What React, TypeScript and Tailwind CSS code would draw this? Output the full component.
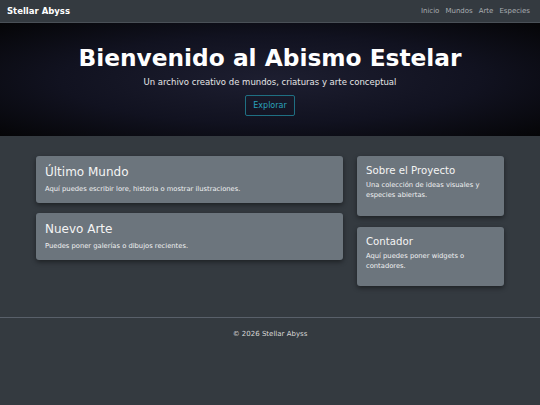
import React from "react";

const font = { fontFamily: '"DejaVu Sans", Verdana, sans-serif' };

export default function App() {
  return (
    <div style={font} className="w-[540px] h-[405px] bg-[#343a40] flex flex-col overflow-hidden">
      <nav className="h-[23px] flex items-center justify-between px-[7px] bg-[#343a40] border-b border-[#4a5057] shrink-0">
        <span className="text-[8.5px] font-bold text-white">Stellar Abyss</span>
        <div className="flex gap-[6px] text-[7px] text-[#a9adb1] pr-[3px]">
          <span>Inicio</span>
          <span>Mundos</span>
          <span>Arte</span>
          <span>Especies</span>
        </div>
      </nav>
      <header className="h-[113px] shrink-0 flex flex-col items-center bg-[radial-gradient(ellipse_at_center,#1d1e30_0%,#111220_55%,#050507_100%)]">
        <h1 className="mt-[21px] text-[23.3px] leading-[28px] font-bold text-white">Bienvenido al Abismo Estelar</h1>
        <p className="mt-[4px] text-[8.5px] leading-[12px] text-[#e6e6e6]">Un archivo creativo de mundos, criaturas y arte conceptual</p>
        <button className="mt-[7px] w-[50px] h-[21px] border border-[#1f6f82] rounded-[2px] text-[8px] text-[#2aa3bd]">Explorar</button>
      </header>
      <main className="flex gap-[14px] px-[36px] pt-[20px] h-[182px] shrink-0 border-b border-[#59606a]">
        <div className="w-[307px] flex flex-col gap-[10px]">
          <div className="bg-[#6c757d] rounded-[3px] px-[9px] pt-[8px] pb-[8.5px] shadow-[0_2px_5px_rgba(0,0,0,0.45)]">
            <h4 className="text-[12px] leading-[16px] text-[#f4f4f4] mb-[3.5px]">Último Mundo</h4>
            <p className="text-[6.75px] leading-[11px] text-[#f0f1f2]">Aquí puedes escribir lore, historia o mostrar ilustraciones.</p>
          </div>
          <div className="bg-[#6c757d] rounded-[3px] px-[9px] pt-[8px] pb-[8.5px] shadow-[0_2px_5px_rgba(0,0,0,0.45)]">
            <h4 className="text-[12px] leading-[16px] text-[#f4f4f4] mb-[3.5px]">Nuevo Arte</h4>
            <p className="text-[6.75px] leading-[11px] text-[#f0f1f2]">Puedes poner galerías o dibujos recientes.</p>
          </div>
        </div>
        <div className="w-[147px] flex flex-col gap-[11px]">
          <div className="bg-[#6c757d] rounded-[3px] px-[9px] pt-[8px] pb-[15px] shadow-[0_2px_5px_rgba(0,0,0,0.45)]">
            <h5 className="text-[10.2px] leading-[14px] text-[#f4f4f4] mb-[2px]">Sobre el Proyecto</h5>
            <p className="text-[6.75px] leading-[10.4px] text-[#f0f1f2]">Una colección de ideas visuales y especies abiertas.</p>
          </div>
          <div className="bg-[#6c757d] rounded-[3px] px-[9px] pt-[8px] pb-[14px] shadow-[0_2px_5px_rgba(0,0,0,0.45)]">
            <h5 className="text-[10.2px] leading-[14px] text-[#f4f4f4] mb-[2px]">Contador</h5>
            <p className="text-[6.75px] leading-[10.4px] text-[#f0f1f2]">Aquí puedes poner widgets o contadores.</p>
          </div>
        </div>
      </main>
      <footer className="pt-[11px] text-center text-[7px] text-[#d8d8d8]">© 2026 Stellar Abyss</footer>
    </div>
  );
}
